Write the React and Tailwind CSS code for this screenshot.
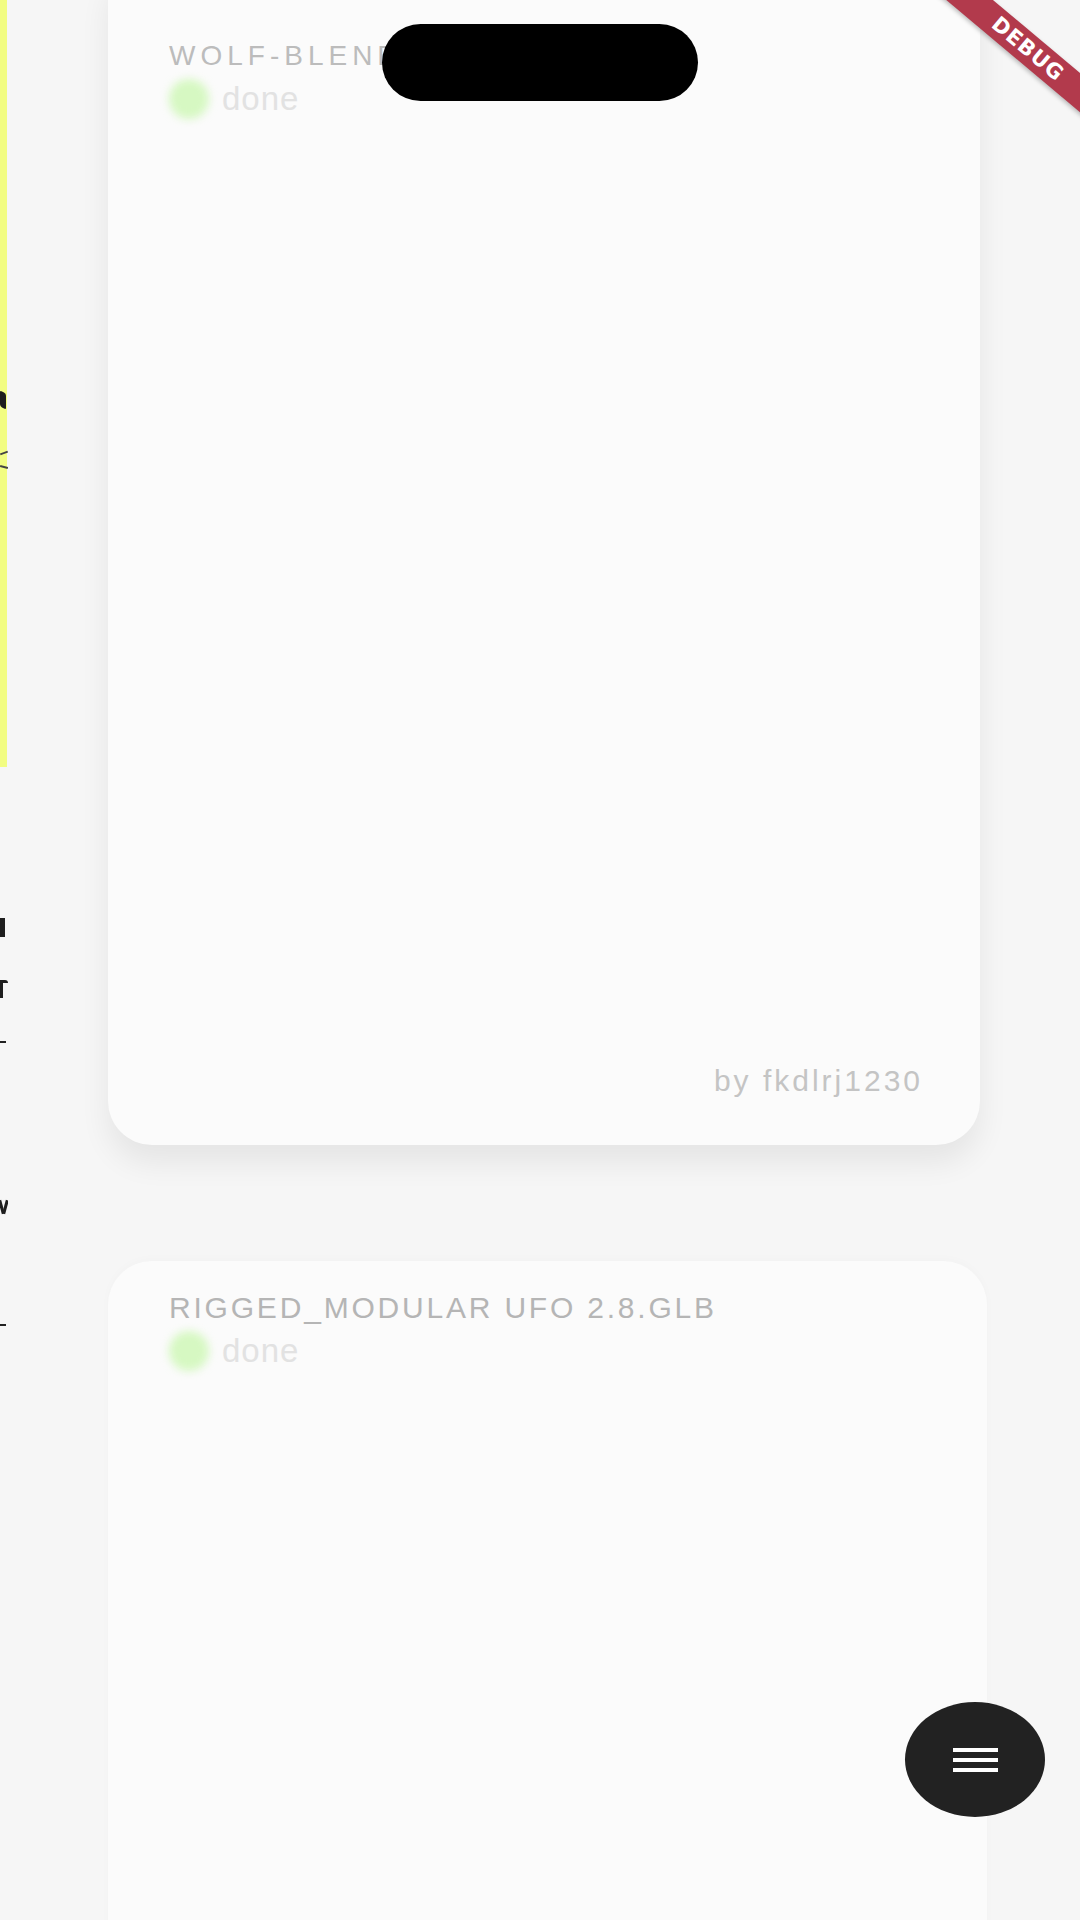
import React from 'react';

const sans = { fontFamily: '"Liberation Sans", Arial, sans-serif' };

const StatusRow = ({ label = 'done' }) => (
  <div className="flex items-center gap-[13px] h-[40px] mt-[6px]">
    <span className="w-[40px] h-[40px] rounded-full bg-[#d6f8c2] blur-[4px]" />
    <span className="text-[33px] leading-[40px] tracking-[1px] text-[#e2e2e2]" style={sans}>{label}</span>
  </div>
);

const ModelCard = ({ title, author, titleClass, className }) => (
  <div className={`rounded-[44px] bg-[#fbfbfb] flex flex-col shrink-0 ${className}`}>
    <h3 className={`leading-[34px] ${titleClass}`} style={sans}>{title}</h3>
    <StatusRow />
    <div className="flex-1" />
    {author && (
      <div className="flex justify-end pr-[57px] pb-[46px]">
        <span className="text-[30px] leading-[36px] text-[#c4c4c4] tracking-[3px]" style={sans}>
          by {author}
        </span>
      </div>
    )}
  </div>
);

// edge of the screen that is sliding out on the left: only glyph slivers remain
const PreviousScreenEdge = () => (
  <div className="w-[8px] shrink-0 flex flex-col overflow-hidden">
    <div className="h-[767px] w-[7px] bg-[#f2fd82] flex flex-col pt-[392px] gap-[44px]">
      <div className="w-[6px] h-[16px] bg-[#1e1e1e] rounded-[2px] skew-y-[30deg]" />
      <div className="flex flex-col gap-[12px]">
        <div className="w-[8px] h-[2px] bg-[#444] -rotate-[20deg]" />
        <div className="w-[8px] h-[2px] bg-[#444] rotate-[15deg]" />
      </div>
    </div>
    <div className="flex flex-col pt-[151px] gap-[43px]">
      <div className="w-[5px] h-[19px] bg-[#1e1e1e]" />
      <div className="flex gap-0 h-[18px]">
        <div className="w-[3px] h-[18px] bg-[#1e1e1e]" />
        <div className="w-[5px] h-[3px] bg-[#1e1e1e] rounded-tr-[3px]" />
      </div>
      <div className="w-[6px] h-[2px] bg-[#222]" />
    </div>
    <div className="flex flex-col pt-[157px] gap-[110px]">
      <div className="flex gap-[1px] h-[14px]">
        <div className="w-[3px] h-[14px] bg-[#1e1e1e] -rotate-[15deg]" />
        <div className="w-[3px] h-[14px] bg-[#1e1e1e] rotate-[15deg]" />
      </div>
      <div className="w-[6px] h-[2px] bg-[#222]" />
    </div>
  </div>
);

export default function App() {
  return (
    <div className="relative w-[1080px] h-[1920px] overflow-hidden bg-[#f6f6f6] flex">
      <PreviousScreenEdge />

      {/* card list */}
      <div className="flex flex-col gap-[116px] pl-[100px]">
        <ModelCard
          title="WOLF-BLENDER.GLB"
          author="fkdlrj1230"
          titleClass="text-[28px] tracking-[5px] text-[#bcbcbc]"
          className="-mt-[44px] h-[1189px] pt-[83px] pl-[61px] shadow-[0_18px_30px_rgba(0,0,0,0.07)] w-[872px]"
        />
        <ModelCard
          title="RIGGED_MODULAR UFO 2.8.GLB"
          titleClass="text-[30px] tracking-[2.8px] text-[#b5b5b5]"
          className="h-[900px] pt-[30px] pl-[61px] w-[879px] shadow-[0_-2px_10px_rgba(0,0,0,0.02)]"
        />
      </div>

      {/* camera cutout */}
      <div className="absolute left-[382px] top-[24px] w-[316px] h-[77px] rounded-full bg-black" />

      {/* debug banner */}
      <div className="absolute left-[918px] top-[34px] w-[220px] h-[30px] rotate-[40deg] bg-[#b23a4c] shadow-[0_2px_4px_rgba(0,0,0,0.25)] flex items-center justify-center">
        <span className="text-white text-[21px] font-bold tracking-[1px] leading-none" style={{ fontFamily: '"DejaVu Sans", sans-serif' }}>DEBUG</span>
      </div>

      {/* menu fab */}
      <button className="absolute left-[905px] top-[1702px] w-[140px] h-[115px] rounded-[50%] bg-[#222222] flex flex-col items-center justify-center gap-[6px]">
        <span className="block w-[45px] h-[4px] bg-white" />
        <span className="block w-[45px] h-[4px] bg-white" />
        <span className="block w-[45px] h-[4px] bg-white" />
      </button>
    </div>
  );
}
